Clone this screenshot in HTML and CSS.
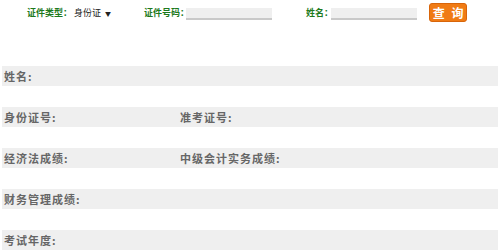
FILE: index.html
```html
<!DOCTYPE html>
<html lang="zh-CN">
<head>
<meta charset="UTF-8">
<title>成绩查询</title>
<link rel="stylesheet" href="styles.css">
</head>
<body>

<div class="search">
  <span class="lbl lbl-type">证件类型：</span>
  <span class="idtype">身份证 <span class="arrow">&#9660;</span></span>
  <span class="lbl lbl-no">证件号码：</span>
  <input type="text" class="field field-no">
  <span class="lbl lbl-name">姓名：</span>
  <input type="text" class="field field-name">
  <button class="btn">查 询</button>
</div>

<div class="result">
  <div class="row">
    <div class="cell">姓名:</div>
  </div>
  <div class="row">
    <div class="cell">身份证号:</div>
    <div class="cell">准考证号:</div>
  </div>
  <div class="row">
    <div class="cell">经济法成绩:</div>
    <div class="cell">中级会计实务成绩:</div>
  </div>
  <div class="row">
    <div class="cell">财务管理成绩:</div>
  </div>
  <div class="row">
    <div class="cell">考试年度:</div>
  </div>
</div>

</body>
</html>
```

FILE: styles.css
```css
body {
  margin: 0;
  background-color: #fff;
  font-family: "Noto Sans CJK SC", sans-serif;
}

.search {
  display: flex;
  align-items: center;
  height: 24px;
}

.lbl {
  font-size: 9px;
  font-weight: bold;
  color: #1d7a1d;
  white-space: nowrap;
}

.lbl-type {
  margin-left: 27px;
}

.idtype {
  margin-left: 2px;
  font-size: 9px;
  color: #222;
  white-space: nowrap;
}

.arrow {
  font-size: 6px;
  margin-left: 2px;
}

.lbl-no {
  margin-left: 33px;
}

.lbl-name {
  margin-left: 34px;
}

.field {
  width: 86px;
  height: 10px;
  padding: 0;
  margin: 3px 0 0 0;
  border: none;
  border-bottom: 2px solid #c9c9c9;
  background-color: #efefef;
  outline: none;
}

.field-no {
  margin-left: -3px;
}

.field-name {
  margin-left: -2px;
}

.btn {
  margin-left: 12px;
  width: 38px;
  height: 19px;
  padding: 0;
  border: 1px solid #d8650a;
  border-radius: 3px;
  background-color: #f07b14;
  color: #fff;
  font-family: "Noto Sans CJK SC", sans-serif;
  font-size: 12px;
  font-weight: bold;
  line-height: 17px;
  letter-spacing: 2px;
  text-indent: 2px;
}

.result {
  padding-top: 42px;
}

.row {
  display: flex;
  align-items: center;
  height: 20px;
  margin: 0 2px 21px 2px;
  background-color: #efefef;
}

.row:last-child {
  margin-bottom: 0;
}

.cell {
  width: 174px;
  padding-left: 2px;
  font-size: 11px;
  font-weight: bold;
  letter-spacing: 1px;
  color: #666;
  white-space: nowrap;
}
```
